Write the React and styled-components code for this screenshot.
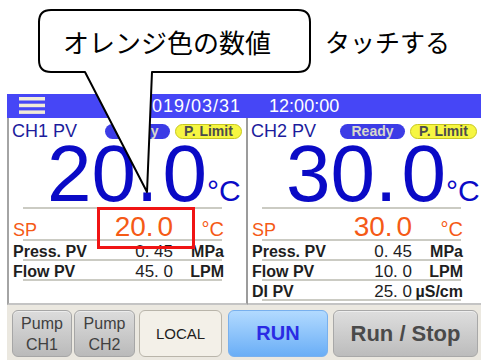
import React from "react";
import styled, { createGlobalStyle } from "styled-components";

const channels = [
  {
    name: "CH1 PV",
    pv: "20. 0",
    sp: "20. 0",
    highlight: true,
    rows: [
      { label: "Press. PV", value: "0. 45", unit: "MPa" },
      { label: "Flow PV", value: "45. 0", unit: "LPM" },
    ],
  },
  {
    name: "CH2 PV",
    pv: "30. 0",
    sp: "30. 0",
    rows: [
      { label: "Press. PV", value: "0. 45", unit: "MPa" },
      { label: "Flow PV", value: "10. 0", unit: "LPM" },
      { label: "DI PV", value: "25. 0", unit: "µS/cm" },
    ],
  },
];

const App = () => {
  return (
    <>
      <GlobalStyle />
      <Page>
        <TopArea>
          <CalloutShape viewBox="0 0 481 200" width="481" height="200">
            <path
              d="M51 10 H298 Q310 10 310 22 V60 Q310 72 298 72 H152 L147 192 L85 72 H51 Q39 72 39 60 V22 Q39 10 51 10 Z"
              fill="#ffffff"
              stroke="#000000"
              strokeWidth="2"
              strokeLinejoin="round"
            />
          </CalloutShape>
          <CalloutText>オレンジ色の数値</CalloutText>
          <TouchText>タッチする</TouchText>
        </TopArea>
        <Screen>
          <Header>
            <MenuIcon width="26" height="17" viewBox="0 0 26 17">
              <rect x="0" y="0" width="26" height="3.5" fill="#f1ebd8" />
              <rect x="0" y="6.7" width="26" height="3.5" fill="#f1ebd8" />
              <rect x="0" y="13.4" width="26" height="3.5" fill="#f1ebd8" />
            </MenuIcon>
            <DateText>2019/03/31</DateText>
            <TimeText>12:00:00</TimeText>
          </Header>
          <Panels>
            {channels.map((ch, i) => (
              <Panel key={ch.name} $first={i === 0}>
                <TopRow>
                  <ChannelName>{ch.name}</ChannelName>
                  <ReadyBadge>Ready</ReadyBadge>
                  <LimitBadge>P. Limit</LimitBadge>
                </TopRow>
                <BigRow>
                  <BigValue>{ch.pv}</BigValue>
                  <BigUnit>°C</BigUnit>
                </BigRow>
                <SpRow>
                  <SpLabel>SP</SpLabel>
                  <SpValue>
                    {ch.sp}
                    {ch.highlight && <Highlight />}
                  </SpValue>
                  <SpUnit>°C</SpUnit>
                </SpRow>
                {ch.rows.map((r) => (
                  <DataRow key={r.label}>
                    <DataLabel>{r.label}</DataLabel>
                    <DataValue>{r.value}</DataValue>
                    <DataUnit>{r.unit}</DataUnit>
                  </DataRow>
                ))}
              </Panel>
            ))}
          </Panels>
          <BottomBar>
            <PumpButton>
              Pump
              <br />
              CH1
            </PumpButton>
            <PumpButton $gap={2} $w={61}>
              Pump
              <br />
              CH2
            </PumpButton>
            <LocalButton>LOCAL</LocalButton>
            <RunButton>RUN</RunButton>
            <RunStopButton>Run / Stop</RunStopButton>
          </BottomBar>
        </Screen>
      </Page>
    </>
  );
};

const GlobalStyle = createGlobalStyle`
  html, body {
    margin: 0;
    padding: 0;
    background: #ffffff;
  }
  body {
    font-family: "Liberation Sans", Arial, sans-serif;
  }
`;

const Page = styled.div`
  position: relative;
  width: 481px;
  height: 360px;
  overflow: hidden;
  background: #ffffff;
`;

const TopArea = styled.div`
  position: relative;
  height: 94px;
  box-sizing: border-box;
  padding-bottom: 11px;
  display: flex;
  align-items: center;
  font-family: "Noto Sans CJK JP", sans-serif;
  color: #000000;
`;

const CalloutShape = styled.svg`
  position: absolute;
  left: 0;
  top: 0;
  z-index: 5;
  pointer-events: none;
`;

const CalloutText = styled.span`
  position: relative;
  z-index: 6;
  margin-left: 63px;
  font-size: 26px;
  line-height: 1;
`;

const TouchText = styled.span`
  margin-left: 54px;
  font-size: 25px;
  line-height: 1;
`;

const Screen = styled.div`
  position: relative;
  z-index: 1;
  margin-left: 7px;
  display: flex;
  flex-direction: column;
`;

const Header = styled.div`
  height: 24px;
  display: flex;
  align-items: center;
  background: #4646f6;
  color: #ffffff;
  font-size: 18px;
`;

const MenuIcon = styled.svg`
  margin-left: 12px;
  margin-top: -1px;
`;

const DateText = styled.span`
  margin-left: 96px;
  letter-spacing: 1px;
`;

const TimeText = styled.span`
  margin-left: 28px;
`;

const Panels = styled.div`
  display: flex;
  height: 187px;
  background: #ffffff;
`;

const Panel = styled.section`
  box-sizing: border-box;
  width: ${({ $first }) => ($first ? "241px" : "233px")};
  display: flex;
  flex-direction: column;
  overflow: hidden;
  border-left: ${({ $first }) => ($first ? "2px solid #a4a4a4" : "none")};
  border-right: ${({ $first }) => ($first ? "2px solid #9c9c9c" : "none")};
  border-bottom: 2px solid #c4c4c4;
`;

const TopRow = styled.div`
  box-sizing: border-box;
  height: 21px;
  padding: 5px 4px 0 3px;
  display: flex;
  align-items: center;
  gap: 5px;
`;

const ChannelName = styled.span`
  font-size: 18px;
  line-height: 16px;
  color: #1c1c9c;
  margin-right: auto;
`;

const Badge = styled.span`
  height: 15px;
  box-sizing: border-box;
  border-radius: 8px;
  font-size: 14px;
  font-weight: bold;
  line-height: 15px;
  text-align: center;
`;

const ReadyBadge = styled(Badge)`
  width: 65px;
  background: #3c3ce6;
  color: #d8d8cc;
`;

const LimitBadge = styled(Badge)`
  width: 67px;
  background: #f6f642;
  border: 1px solid #c8c820;
  line-height: 13px;
  color: #4c4c4c;
`;

const lineBg = `
  background-image: linear-gradient(#cbcbc3, #cbcbc3);
  background-repeat: no-repeat;
  background-size: 199px 2px;
  background-position: 14px 100%;
`;

const BigRow = styled.div`
  box-sizing: border-box;
  height: 70px;
  flex-shrink: 0;
  padding-left: 38px;
  display: flex;
  align-items: baseline;
  white-space: nowrap;
  color: #0a0ac6;
  ${lineBg}
`;

const BigValue = styled.span`
  flex-shrink: 0;
  font-size: 80px;
  line-height: 70px;
  word-spacing: -18px;
`;

const BigUnit = styled.span`
  flex-shrink: 0;
  font-size: 30px;
  line-height: 1;
  margin-left: 0;
`;

const gridCols = `
  display: grid;
  grid-template-columns: 100px 60px 51px;
  padding-left: 4px;
  align-items: baseline;
  flex-shrink: 0;
`;

const SpRow = styled.div`
  box-sizing: border-box;
  height: 32px;
  padding-top: 4px;
  ${gridCols}
  color: #f55a16;
  ${lineBg}
`;

const SpLabel = styled.span`
  font-size: 18px;
  line-height: 18px;
`;

const SpValue = styled.span`
  position: relative;
  font-size: 28px;
  line-height: 28px;
  text-align: right;
  white-space: nowrap;
  word-spacing: -4px;
`;

const Highlight = styled.span`
  position: absolute;
  left: -16px;
  right: -22px;
  top: -6px;
  bottom: -8px;
  border: 3px solid #f01414;
`;

const SpUnit = styled.span`
  font-size: 20px;
  line-height: 20px;
  text-align: right;
`;

const DataRow = styled.div`
  box-sizing: border-box;
  height: 20px;
  padding-top: 2px;
  ${gridCols}
  color: #1e1e1e;
  ${lineBg}
`;

const DataLabel = styled.span`
  font-size: 16px;
  line-height: 18px;
  font-weight: bold;
  white-space: nowrap;
`;

const DataValue = styled.span`
  font-size: 17px;
  line-height: 18px;
  text-align: right;
  white-space: nowrap;
`;

const DataUnit = styled.span`
  font-size: 16px;
  line-height: 18px;
  font-weight: bold;
  text-align: right;
  white-space: nowrap;
`;

const BottomBar = styled.div`
  height: 55px;
  box-sizing: border-box;
  padding: 5px 0 0 5px;
  display: flex;
  align-items: flex-start;
  background: #ebe8e0;
`;

const BarButton = styled.button`
  box-sizing: border-box;
  flex-shrink: 0;
  height: 47px;
  width: ${({ $w }) => $w || 60}px;
  margin: 0 0 0 ${({ $gap }) => $gap || 0}px;
  padding: 0;
  border-radius: 6px;
  display: flex;
  align-items: center;
  justify-content: center;
  text-align: center;
  font-family: "Liberation Sans", Arial, sans-serif;
  cursor: pointer;
`;

const PumpButton = styled(BarButton)`
  font-size: 16px;
  line-height: 21px;
  color: #404040;
  background: linear-gradient(#dcdcdc, #bababa);
  border: 1px solid #a6a6a6;
  box-shadow: inset 0 1px 0 #ececec;
`;

const LocalButton = styled(BarButton).attrs({ $w: 83, $gap: 4 })`
  font-size: 15px;
  color: #1e1e1e;
  background: #f3f0e8;
  border: 1px solid #b9b5aa;
`;

const RunButton = styled(BarButton).attrs({ $w: 100, $gap: 6 })`
  font-size: 20px;
  font-weight: bold;
  color: #2a2ae4;
  background: linear-gradient(#b2daff, #6aaef6);
  border: 1px solid #78b0ee;
`;

const RunStopButton = styled(BarButton).attrs({ $w: 145, $gap: 5 })`
  font-size: 22px;
  font-weight: bold;
  color: #4a4a4a;
  background: linear-gradient(#dedede, #bcbcbc);
  border: 1px solid #a8a8a8;
  box-shadow: inset 0 1px 0 #eeeeee;
`;

export default App;
